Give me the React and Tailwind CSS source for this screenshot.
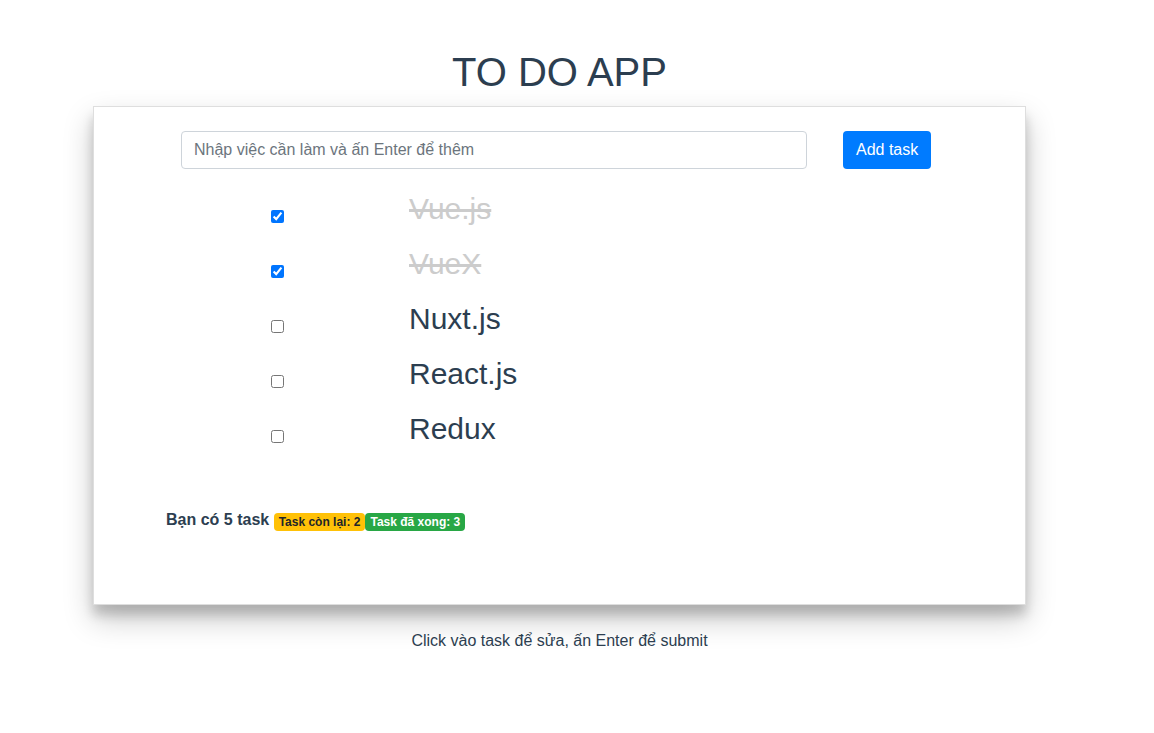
import React, { useState } from "react";

const initialTasks = [
  { id: 1, name: "Vue.js", done: true },
  { id: 2, name: "VueX", done: true },
  { id: 3, name: "Nuxt.js", done: false },
  { id: 4, name: "React.js", done: false },
  { id: 5, name: "Redux", done: false },
];

export default function App() {
  const [tasks, setTasks] = useState(initialTasks);
  const [text, setText] = useState("");

  // the original app shows the counts this way round
  const finished = tasks.filter((t) => t.done).length;
  const remaining = tasks.length - finished;

  const toggle = (id) =>
    setTasks((list) =>
      list.map((t) => (t.id === id ? { ...t, done: !t.done } : t)),
    );

  const addTask = () => {
    if (!text.trim()) return;
    setTasks((list) => [...list, { id: Date.now(), name: text.trim(), done: false }]);
    setText("");
  };

  return (
    <div className="min-h-screen bg-white text-[#2c3e50] font-['Liberation_Sans',Arial,sans-serif]">
      <div className="ml-[93px] w-[933px] pt-[48px]">
        <h1 className="text-center text-[40px] leading-[48px] font-normal mb-[10px]">
          TO DO APP
        </h1>

        <div className="bg-white border border-[#dedede] shadow-[0_14px_28px_rgba(0,0,0,0.22),0_10px_10px_rgba(0,0,0,0.16)] pt-6 pb-[72px]">
          <div className="flex items-center pl-[87px]">
            <input
              value={text}
              onChange={(e) => setText(e.target.value)}
              onKeyDown={(e) => e.key === "Enter" && addTask()}
              placeholder="Nhập việc cần làm và ấn Enter để thêm"
              className="w-[626px] h-[38px] px-3 text-base border border-[#ced4da] rounded outline-none text-[#495057] placeholder:text-[#6c757d]"
            />
            <button
              onClick={addTask}
              className="ml-[36px] h-[38px] px-[13px] bg-[#007bff] text-white text-base rounded"
            >
              Add task
            </button>
          </div>

          <div className="mt-5">
            {tasks.map((t) => (
              <div key={t.id} className="flex items-start h-[55px]">
                <input
                  type="checkbox"
                  checked={t.done}
                  onChange={() => toggle(t.id)}
                  className="ml-[177px] mt-[21px] w-[13px] h-[13px] m-0"
                />
                <span
                  className={`ml-[125px] mt-[5px] text-[30px] leading-[30px] ${
                    t.done ? "line-through text-[#cccccc]" : ""
                  }`}
                >
                  {t.name}
                </span>
              </div>
            ))}
          </div>

          <div className="mt-[44px] pl-[72px] text-base leading-6 font-bold">
            Bạn có {tasks.length} task{" "}
            <span className="inline-block align-[-1px] px-[5px] py-[3px] text-xs leading-none font-bold rounded bg-[#ffc107] text-[#212529]">
              Task còn lại: {finished}
            </span>
            <span className="inline-block align-[-1px] px-[5px] py-[3px] text-xs leading-none font-bold rounded bg-[#28a745] text-white">
              Task đã xong: {remaining}
            </span>
          </div>
        </div>

        <p className="text-center text-base leading-6 mt-[24px]">
          Click vào task để sửa, ấn Enter để submit
        </p>
      </div>
    </div>
  );
}
